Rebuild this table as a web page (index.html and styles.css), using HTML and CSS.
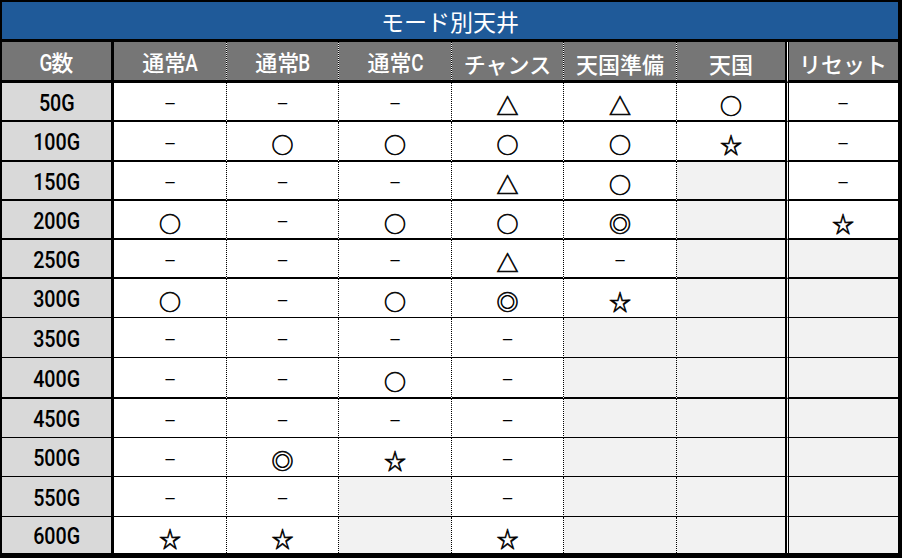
FILE: index.html
```html
<!DOCTYPE html>
<html lang="ja">
<head>
<meta charset="utf-8">
<title>モード別天井</title>
<link rel="stylesheet" href="styles.css">
</head>
<body>
<div class="sheet">
  <div class="title">モード別天井</div>
  <div class="row head">
    <div><span><span class="lat">G</span>数</span></div>
    <div><span>通常<span class="lat">A</span></span></div>
    <div><span>通常<span class="lat">B</span></span></div>
    <div><span>通常<span class="lat">C</span></span></div>
    <div>チャンス</div>
    <div>天国準備</div>
    <div>天国</div>
    <div>リセット</div>
  </div>
  <div class="row b2">
    <div><span class="num">50G</span></div>
    <div class="d">−</div><div class="d">−</div><div class="d">−</div>
    <div class="s">△</div><div class="s">△</div><div class="s">○</div><div class="d">−</div>
  </div>
  <div class="row b2">
    <div><span class="num">100G</span></div>
    <div class="d">−</div><div class="s">○</div><div class="s">○</div>
    <div class="s">○</div><div class="s">○</div><div class="s">☆</div><div class="d">−</div>
  </div>
  <div class="row b2">
    <div><span class="num">150G</span></div>
    <div class="d">−</div><div class="d">−</div><div class="d">−</div>
    <div class="s">△</div><div class="s">○</div><div class="gray"></div><div class="d">−</div>
  </div>
  <div class="row b2">
    <div><span class="num">200G</span></div>
    <div class="s">○</div><div class="d">−</div><div class="s">○</div>
    <div class="s">○</div><div class="s">◎</div><div class="gray"></div><div class="s">☆</div>
  </div>
  <div class="row b2">
    <div><span class="num">250G</span></div>
    <div class="d">−</div><div class="d">−</div><div class="d">−</div>
    <div class="s">△</div><div class="d">−</div><div class="gray"></div><div class="gray"></div>
  </div>
  <div class="row">
    <div><span class="num">300G</span></div>
    <div class="s">○</div><div class="d">−</div><div class="s">○</div>
    <div class="s">◎</div><div class="s">☆</div><div class="gray"></div><div class="gray"></div>
  </div>
  <div class="row">
    <div><span class="num">350G</span></div>
    <div class="d">−</div><div class="d">−</div><div class="d">−</div>
    <div class="d">−</div><div class="gray"></div><div class="gray"></div><div class="gray"></div>
  </div>
  <div class="row b2">
    <div><span class="num">400G</span></div>
    <div class="d">−</div><div class="d">−</div><div class="s">○</div>
    <div class="d">−</div><div class="gray"></div><div class="gray"></div><div class="gray"></div>
  </div>
  <div class="row">
    <div><span class="num">450G</span></div>
    <div class="d">−</div><div class="d">−</div><div class="d">−</div>
    <div class="d">−</div><div class="gray"></div><div class="gray"></div><div class="gray"></div>
  </div>
  <div class="row">
    <div><span class="num">500G</span></div>
    <div class="d">−</div><div class="s">◎</div><div class="s">☆</div>
    <div class="d">−</div><div class="gray"></div><div class="gray"></div><div class="gray"></div>
  </div>
  <div class="row">
    <div><span class="num">550G</span></div>
    <div class="d">−</div><div class="d">−</div><div class="gray"></div>
    <div class="d">−</div><div class="gray"></div><div class="gray"></div><div class="gray"></div>
  </div>
  <div class="row last">
    <div><span class="num">600G</span></div>
    <div class="s">☆</div><div class="s">☆</div><div class="gray"></div>
    <div class="s">☆</div><div class="gray"></div><div class="gray"></div><div class="gray"></div>
  </div>
</div>
</body>
</html>
```
FILE: styles.css
```css
html, body {
  margin: 0;
  padding: 0;
  background: #fff;
}

.sheet {
  display: grid;
  box-sizing: border-box;
  width: 902px;
  height: 558px;
  border-style: solid;
  border-color: #000;
  border-width: 2px 4px 5px 2px;
  background: #fff;
  grid-template-columns: 112px 113px 112px 113px 112px 113px 110px 111px;
  grid-template-rows: 40px 41px 39px 40px 39px 39px 39px 39px 40px 41px 39px 39px 40px 36px;
  font-family: "Noto Sans CJK JP", "Noto Sans", sans-serif;
  color: #000;
}

.title {
  grid-column: 1 / -1;
  box-sizing: border-box;
  background-color: #1f5a99;
  border-bottom: 3px solid #000;
  color: #fff;
  font-size: 23px;
  display: flex;
  align-items: center;
  justify-content: center;
  padding-top: 1px;
}

.row {
  display: contents;
}

.row > div {
  box-sizing: border-box;
  display: flex;
  align-items: center;
  justify-content: center;
  padding-top: 4px;
  border-right: 1px dotted #000;
  border-bottom: 1px solid #000;
  background-color: #fff;
  background-clip: padding-box;
  font-size: 22px;
  line-height: 1;
}

.row > div:first-child {
  border-right: 3px solid #000;
  background-color: #d9d9d9;
  padding-top: 2px;
}

.row > div:nth-child(7) {
  border-right: 2px solid #000;
}

.row > div:nth-child(8) {
  border-right: 0;
  border-left: 1px solid transparent;
  box-shadow: inset 1px 0 0 #000;
}

.row.b2 > div {
  border-bottom-width: 2px;
}

.row.last > div {
  border-bottom: 0;
}

.row.head > div {
  border-bottom: 3px solid #000;
  background-color: #767676;
  color: #fff;
  font-weight: 500;
  font-size: 22px;
  padding-top: 3px;
}

.row > div.gray {
  background-color: #f2f2f2;
}

.row > div.s {
  font-size: 22px;
  -webkit-text-stroke: 0.6px #000;
}

.row > div.d {
  font-family: "Liberation Sans", sans-serif;
  font-size: 19px;
}

.num,
.lat {
  display: inline-block;
  font-family: Roboto, "Liberation Sans", sans-serif;
  font-weight: 500;
  transform: scaleX(0.82);
}

.num {
  font-size: 24px;
}

.lat {
  font-size: 23px;
  margin: 0 -2px;
}
```
